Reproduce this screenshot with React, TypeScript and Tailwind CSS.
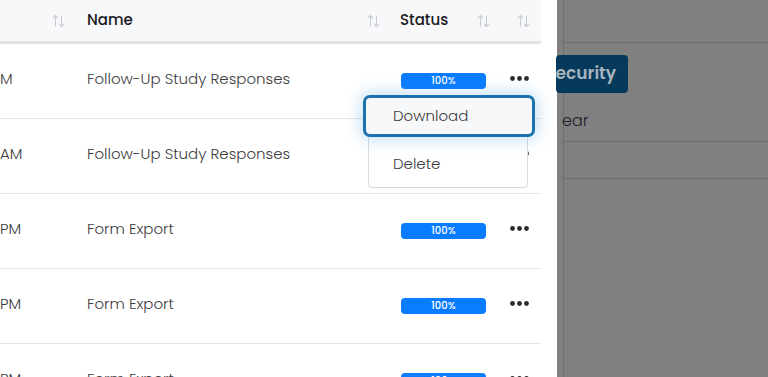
import React from "react";

const font = { fontFamily: '"Poppins", "Inter", "Liberation Sans", sans-serif' };

function SortIcon() {
  return (
    <svg width="13" height="14" viewBox="0 0 13 14" fill="none" stroke="#c9ccd1" strokeWidth="1.1" strokeLinecap="round" strokeLinejoin="round">
      <path d="M3.5 12V1.5M1.2 3.8L3.5 1.5L5.8 3.8" />
      <path d="M9.5 2V12.5M7.2 10.2L9.5 12.5L11.8 10.2" />
    </svg>
  );
}

function Dots() {
  return (
    <svg width="19" height="5" viewBox="0 0 19 5" fill="#2b2b2b">
      <circle cx="2.5" cy="2.5" r="2.4" />
      <circle cx="9.5" cy="2.5" r="2.4" />
      <circle cx="16.5" cy="2.5" r="2.4" />
    </svg>
  );
}

const rows = [
  { t: "M", n: "Follow-Up Study Responses" },
  { t: "AM", n: "Follow-Up Study Responses" },
  { t: "PM", n: "Form Export" },
  { t: "PM", n: "Form Export" },
  { t: "PM", n: "Form Export" },
];

export default function App() {
  return (
    <div className="w-[768px] h-[377px] overflow-hidden flex bg-[#808080]" style={font}>
      <div className="relative w-[557px] h-full bg-white flex shrink-0">
        <div className="w-[541px] flex flex-col">
          <div className="h-[44px] shrink-0 flex items-center bg-[#f7f8fa] border-b-[3px] border-[#e1e3e7] text-[15px] font-medium text-[#1b1b1f]">
            <div className="w-[87px] flex justify-end pr-[22px] pt-[1px]"><SortIcon /></div>
            <div className="w-[313px] flex items-center justify-between pr-[20px]"><span>Name</span><SortIcon /></div>
            <div className="w-[105px] flex items-center justify-between pr-[15px]"><span>Status</span><SortIcon /></div>
            <div className="flex-1 flex justify-end pr-[11px]"><SortIcon /></div>
          </div>
          {rows.map((r, i) => (
            <div key={i} className="h-[75px] shrink-0 flex items-center border-b border-[#e3e4e8] text-[15px] text-[#3d3d40] font-light">
              <div className="w-[87px] pb-[3px]">{r.t}</div>
              <div className="w-[314px] pb-[3px]">{r.n}</div>
              <div className="w-[109px]">
                <div className="w-[85px] h-[16px] rounded-[4px] bg-[#0a7cff] text-white text-[10px] font-medium flex items-center justify-center leading-none">100%</div>
              </div>
              <div className="flex-1 pb-[6px]"><Dots /></div>
            </div>
          ))}
        </div>
        <div className="absolute left-[368px] top-[96px] w-[160px] h-[92px] rounded-[4px] border border-[#d9dadf] bg-white text-[15px] text-[#3d3d40] font-light">
          <div className="absolute left-[-6px] top-[-2px] w-[172px] h-[42px] rounded-[7px] border-[3px] border-[#1b72ad] bg-[#f7f8fa] flex items-center pl-[27px] shadow-[0_0_14px_4px_rgba(60,150,220,0.25)]">Download</div>
          <div className="absolute left-[24px] top-[56px]">Delete</div>
        </div>
      </div>
      <div className="flex-1 flex">
        <div className="w-[7px] border-r border-[#6e6e6e] h-full" />
        <div className="flex-1 flex flex-col">
          <div className="h-[43px] border-b border-[#6e6e6e]" />
          <div className="h-[99px] border-b border-[#6e6e6e] relative">
            <div className="absolute left-[-8px] top-[12px] h-[38px] w-[72px] rounded-[4px] bg-[#063a5c] text-[#a8b4bd] text-[17px] font-semibold flex items-center justify-end pr-[12px]">ecurity</div>
            <div className="absolute left-[-2px] top-[66px] text-[16px] text-[#1b1d2b] font-light">ear</div>
          </div>
          <div className="h-[37px] border-b border-[#6e6e6e]" />
        </div>
      </div>
    </div>
  );
}
